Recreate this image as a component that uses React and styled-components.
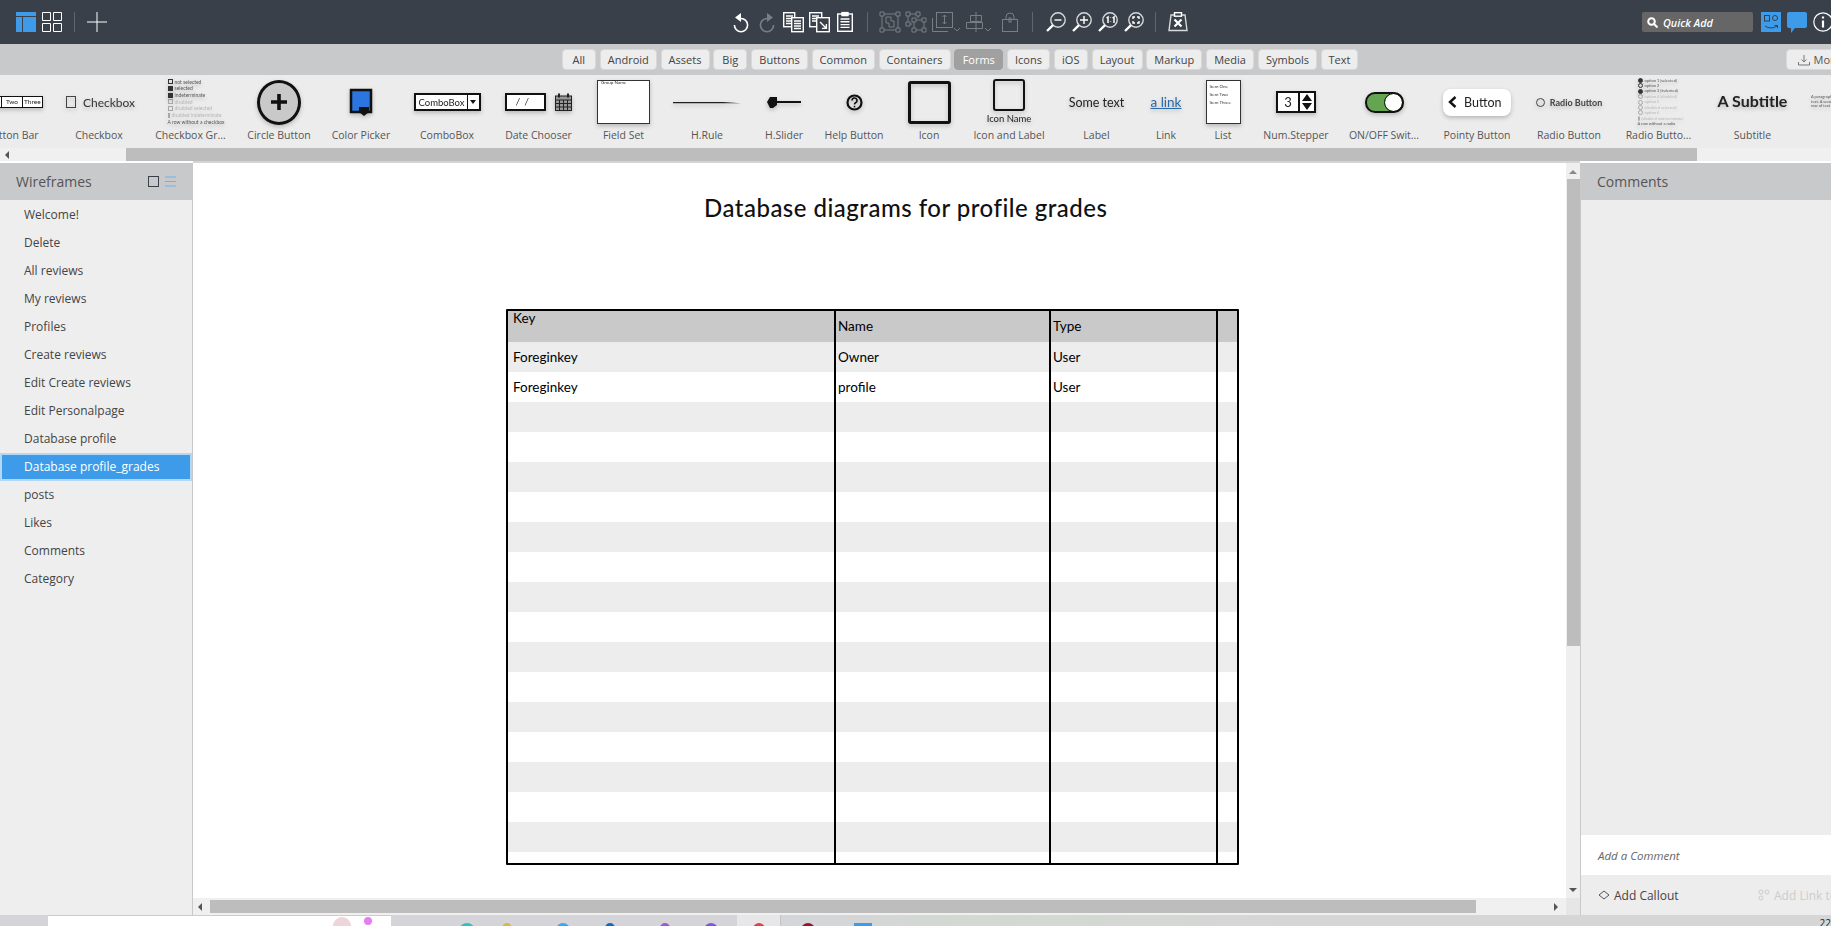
import React from 'react';
import styled, { createGlobalStyle } from 'styled-components';

const GlobalStyle = createGlobalStyle`
  html, body {
    margin: 0;
    padding: 0;
    overflow: hidden;
    background: #fff;
    font-family: 'Open Sans', sans-serif;
  }
`;

const Page = styled.div`
  width: 1831px;
  height: 926px;
  display: flex;
  flex-direction: column;
  overflow: hidden;
`;

/* top toolbar */
const Toolbar = styled.div`
  height: 44px;
  flex: none;
  display: flex;
  align-items: center;
  padding-left: 16px;
  background: #39404a;
  box-sizing: border-box;
`;

const ToolCell = styled.div`
  width: ${p => p.$w}px;
  flex: none;
  height: 20px;
  display: flex;
  opacity: ${p => (p.$dim ? 0.32 : 1)};
  svg { overflow: visible; }
`;

const ToolDivider = styled.div`
  width: ${p => p.$w}px;
  flex: none;
  height: 20px;
  &::before {
    content: '';
    display: block;
    width: 1px;
    height: 20px;
    background: #5f666f;
  }
`;

const QuickAdd = styled.div`
  width: 111px;
  height: 20px;
  flex: none;
  margin-right: 8px;
  border-radius: 2px;
  background: #666;
  color: #fff;
  display: flex;
  align-items: center;
  gap: 5px;
  padding-left: 5px;
  box-sizing: border-box;
  font-size: 10.8px;
  font-style: italic;
  font-weight: 600;
`;

/* filter tabs */
const FilterBar = styled.div`
  height: 31px;
  flex: none;
  display: flex;
  align-items: center;
  gap: 3.75px;
  padding-left: 561.5px;
  background: #c8c9cb;
  box-sizing: border-box;
`;

const Tab = styled.div`
  width: ${p => p.$w}px;
  height: 21px;
  flex: none;
  box-sizing: border-box;
  border: 1px solid ${p => (p.$active ? '#a0a0a0' : '#d8d8d8')};
  border-radius: 4px;
  background: ${p => (p.$active ? '#a0a0a0' : '#ededed')};
  color: ${p => (p.$active ? '#fff' : '#444')};
  font-size: 11px;
  display: flex;
  align-items: center;
  justify-content: center;
`;

const MoreButton = styled.div`
  width: 70px;
  height: 21px;
  flex: none;
  margin-left: 423.75px;
  box-sizing: border-box;
  border: 1px solid #d8d8d8;
  border-radius: 4px;
  background: #ededed;
  color: #555;
  font-size: 11px;
  display: flex;
  align-items: center;
  gap: 4px;
  padding-left: 11px;
`;

/* component library strip */
const Library = styled.div`
  height: 73px;
  flex: none;
  background: #ececec;
  overflow: hidden;
`;

const LibraryRow = styled.div`
  display: flex;
  margin-left: -38px;
  width: 2000px;
`;

const LibraryItem = styled.div`
  width: ${p => p.$w}px;
  flex: none;
  display: flex;
  flex-direction: column;
  align-items: center;
`;

const Thumb = styled.div`
  height: 52px;
  margin-top: 1px;
  width: 100%;
  display: flex;
  align-items: center;
  justify-content: center;
  color: #222;
  font-family: 'Lato', sans-serif;
  filter: drop-shadow(0 2px 2px rgba(0, 0, 0, 0.22)) blur(0.25px);
`;

const ItemLabel = styled.div`
  margin-top: 1px;
  height: 12px;
  line-height: 12px;
  font-size: 10.5px;
  color: #555;
  white-space: nowrap;
`;

const HScroll = styled.div`
  height: ${p => p.$h}px;
  flex: none;
  background: #f0f0f0;
  display: flex;
  align-items: center;
  position: relative;
`;

const ScrollThumb = styled.div`
  height: 13px;
  flex: none;
  width: ${p => p.$w}px;
  margin-left: ${p => p.$left}px;
  background: #bdbdbd;
`;

const ArrowLeft = styled.div`
  position: absolute;
  left: ${p => p.$left}px;
  top: 50%;
  margin-top: -4px;
  border-style: solid;
  border-width: 4px 4px 4px 0;
  border-color: transparent #555 transparent transparent;
`;

const ArrowRight = styled.div`
  position: absolute;
  left: ${p => p.$left}px;
  top: 50%;
  margin-top: -4px;
  border-style: solid;
  border-width: 4px 0 4px 4px;
  border-color: transparent transparent transparent #555;
`;

/* thumbs */
const ButtonBarBox = styled.div`
  display: flex;
  width: 60px;
  height: 10px;
  border: 1px solid #111;
  background: #fff;
  font-size: 6.5px;
  line-height: 10px;
  text-align: center;
`;

const BarSegment = styled.span`
  flex: 1;
  border-left: ${p => (p.$first ? 'none' : '1px solid #111')};
`;

const CheckRow = styled.div`
  display: flex;
  align-items: center;
  gap: 7px;
  font-size: 12px;
  color: #333;
`;

const CheckSquare = styled.div`
  width: 8px;
  height: 10px;
  border: 1px solid #444;
  margin-left: 3px;
`;

const TinyList = styled.div`
  font-size: ${p => p.$size || 5}px;
  line-height: ${p => p.$line || 6.7}px;
  color: #555;
  white-space: nowrap;
  width: ${p => p.$w}px;
`;

const TinyLine = styled.div`
  display: flex;
  align-items: center;
  gap: 2px;
  opacity: ${p => (p.$faded ? 0.35 : 1)};
  &::before {
    content: '';
    display: ${p => (p.$plain ? 'none' : 'block')};
    width: 3px;
    height: 3px;
    border: 0.5px solid #333;
    border-radius: ${p => (p.$round ? '50%' : '0')};
    background: ${p => (p.$on ? '#333' : 'transparent')};
  }
`;

const CircleButton = styled.div`
  width: 38px;
  height: 39px;
  border: 3px solid #111;
  border-radius: 50%;
  background: #c9c9c9;
  display: flex;
  align-items: center;
  justify-content: center;
`;

const ComboBox = styled.div`
  width: 67px;
  height: 18px;
  box-sizing: border-box;
  border: 2px solid #111;
  background: #fff;
  display: flex;
  align-items: center;
  font-size: 9.5px;
  padding-left: 3px;
  justify-content: space-between;
`;

const ComboArrow = styled.div`
  width: 11px;
  height: 14px;
  border-left: 1px solid #111;
  display: flex;
  align-items: center;
  justify-content: center;
  &::after {
    content: '';
    border-style: solid;
    border-width: 4px 3px 0 3px;
    border-color: #111 transparent transparent transparent;
  }
`;

const DateRow = styled.div`
  display: flex;
  align-items: center;
  gap: 9px;
`;

const DateBox = styled.div`
  width: 41px;
  height: 18px;
  box-sizing: border-box;
  border: 2px solid #111;
  background: #fff;
  font-size: 9px;
  font-style: italic;
  word-spacing: 3px;
  padding-left: 9px;
  line-height: 13px;
`;

const FieldBox = styled.div`
  width: ${p => p.$w}px;
  height: 44px;
  box-sizing: border-box;
  border: 1px solid #333;
  background: #fff;
  font-size: 4.5px;
  line-height: ${p => p.$line || 3}px;
  padding: ${p => p.$pad || '0 0 0 3px'};
  color: #333;
  white-space: nowrap;
  overflow: hidden;
`;

const IconFrame = styled.div`
  width: ${p => p.$size}px;
  height: ${p => p.$size}px;
  box-sizing: border-box;
  border: ${p => p.$border}px solid #111;
  border-radius: 3px;
  flex: none;
`;

const IconLabelStack = styled.div`
  display: flex;
  flex-direction: column;
  align-items: center;
  gap: 2px;
  font-size: 9.5px;
  line-height: 12px;
  margin-top: -1px;
`;

const SomeText = styled.div`
  font-size: 12.5px;
  white-space: nowrap;
`;

const LinkText = styled.div`
  font-size: 13.5px;
  color: #2a6aa5;
  text-decoration: underline;
`;

const Stepper = styled.div`
  width: 40px;
  height: 22px;
  box-sizing: border-box;
  border: 2px solid #111;
  background: #fff;
  display: flex;
  font-size: 13px;
  line-height: 18px;
  text-align: center;
`;

const StepperValue = styled.div`
  flex: 1;
  border-right: 2px solid #111;
`;

const StepperArrows = styled.div`
  width: 14px;
  display: flex;
  align-items: center;
  justify-content: center;
`;

const Switch = styled.div`
  width: 39px;
  height: 21px;
  box-sizing: border-box;
  border: 2px solid #111;
  border-radius: 10px;
  background: #63a550;
  display: flex;
  justify-content: flex-end;
`;

const SwitchKnob = styled.div`
  width: 17px;
  height: 17px;
  border-radius: 50%;
  background: #fff;
  outline: 1px solid #111;
`;

const PointyButton = styled.div`
  width: 68px;
  height: 27px;
  border-radius: 8px;
  background: #fff;
  display: flex;
  align-items: center;
  gap: 7px;
  padding-left: 5px;
  box-sizing: border-box;
  font-size: 12.5px;
`;

const RadioRow = styled.div`
  display: flex;
  align-items: center;
  gap: 5px;
  font-size: 9px;
  font-weight: 700;
  color: #444;
  white-space: nowrap;
`;

const RadioDot = styled.div`
  width: 7px;
  height: 7px;
  border: 1px solid #444;
  border-radius: 50%;
`;

const SubtitleText = styled.div`
  font-size: 16px;
  font-weight: 700;
  white-space: nowrap;
  color: #222;
  margin-bottom: 4px;
`;

/* main area */
const Main = styled.div`
  flex: 1;
  min-height: 0;
  display: flex;
`;

const SideHeader = styled.div`
  height: 37px;
  flex: none;
  background: #c8c9cb;
  display: flex;
  align-items: center;
  padding: 0 16px;
  color: #555;
  font-size: 14px;
`;

const HeaderIcons = styled.div`
  margin-left: auto;
  display: flex;
  gap: 6px;
  align-items: center;
`;

const Sidebar = styled.div`
  width: 193px;
  flex: none;
  display: flex;
  flex-direction: column;
  background: #eeeeee;
  border-right: 1px solid #c9c9c9;
  box-sizing: border-box;
  margin-top: 2px;
`;

const PageList = styled.div`
  display: flex;
  flex-direction: column;
  padding-top: 1px;
`;

const PageItem = styled.div`
  height: 28px;
  line-height: ${p => (p.$active ? 24 : 28)}px;
  box-sizing: border-box;
  padding-left: ${p => (p.$active ? 22 : 24)}px;
  font-size: 12px;
  white-space: nowrap;
  color: ${p => (p.$active ? '#fff' : '#444')};
  background: ${p => (p.$active ? '#3d9be9' : 'transparent')};
  border: ${p => (p.$active ? '2px solid #b3d8f5' : 'none')};
`;

const CanvasArea = styled.div`
  flex: 1;
  min-width: 0;
  display: flex;
  flex-direction: column;
  border-top: 2px solid #d4d4d4;
`;

const CanvasRow = styled.div`
  flex: 1;
  min-height: 0;
  display: flex;
`;

const Canvas = styled.div`
  flex: 1;
  min-width: 0;
  background: #fff;
  padding: 30px 0 0 313px;
  box-sizing: border-box;
`;

const Title = styled.div`
  margin-left: 198px;
  height: 30px;
  line-height: 30px;
  font-family: 'Lato', sans-serif;
  font-size: 24px;
  font-weight: 500;
  letter-spacing: 0.49px;
  color: #111;
  white-space: nowrap;
`;

const SheetTable = styled.div`
  width: 733px;
  height: 556px;
  margin-top: 86px;
  box-sizing: border-box;
  border: 2px solid #000;
  border-radius: 1px;
  overflow: hidden;
  background: #fff;
  display: flex;
  flex-direction: column;
  font-family: 'Lato', sans-serif;
  font-size: 13.5px;
  color: #000;
`;

const SheetRow = styled.div`
  height: ${p => p.$h}px;
  flex: none;
  display: grid;
  grid-template-columns: 328px 215px 167px 1fr;
  background: ${p => p.$bg};
`;

const SheetCell = styled.div`
  border-right: ${p => (p.$last ? 'none' : '2px solid #000')};
  padding-left: ${p => p.$pad}px;
  padding-bottom: ${p => (p.$head ? 2 : 0)}px;
  display: flex;
  align-items: ${p => (p.$top ? 'flex-start' : 'center')};
  line-height: ${p => (p.$top ? '14px' : 'normal')};
`;

const VScroll = styled.div`
  width: 14px;
  flex: none;
  background: #efefef;
  display: flex;
  flex-direction: column;
  align-items: center;
  padding-top: 7px;
  position: relative;
`;

const ArrowUp = styled.div`
  border-style: solid;
  border-width: 0 4px 4px 4px;
  border-color: transparent transparent #888 transparent;
`;

const ArrowDown = styled.div`
  position: absolute;
  bottom: 6px;
  border-style: solid;
  border-width: 4px 4px 0 4px;
  border-color: #555 transparent transparent transparent;
`;

const VThumb = styled.div`
  width: 13px;
  height: 467px;
  margin-top: 5px;
  background: #bdbdbd;
`;

const Corner = styled.div`
  position: absolute;
  right: 0;
  top: 0;
  width: 14px;
  height: 100%;
  background: #e6e6e6;
`;

const CommentsPanel = styled.div`
  width: 251px;
  flex: none;
  box-sizing: border-box;
  border-left: 1px solid #c9c9c9;
  background: #ededed;
  display: flex;
  flex-direction: column;
  margin-top: 2px;
`;

const CommentsBody = styled.div`
  flex: 1;
`;

const CommentInput = styled.div`
  height: 40px;
  flex: none;
  background: #fff;
  display: flex;
  align-items: center;
  padding-left: 17px;
  font-size: 11.5px;
  font-style: italic;
  color: #666;
`;

const CommentActions = styled.div`
  height: 40px;
  flex: none;
  display: flex;
  align-items: center;
  padding-left: 17px;
  font-size: 12px;
  white-space: nowrap;
  overflow: hidden;
`;

const CommentAction = styled.div`
  display: flex;
  align-items: center;
  gap: 4px;
  flex: none;
  width: ${p => p.$w}px;
  color: ${p => (p.$off ? '#ccc' : '#444')};
`;

/* OS taskbar cut off at the bottom */
const Taskbar = styled.div`
  height: 11px;
  flex: none;
  display: flex;
  overflow: hidden;
  position: relative;
  background: linear-gradient(90deg, #d5d5d9 0%, #d5d5d9 42%, #d3d9d2 55%, #d6d6d6 70%, #d6d6d6 100%);
`;

const TaskSearch = styled.div`
  width: 343px;
  height: 11px;
  flex: none;
  margin-left: 48px;
  background: #fff;
  border-top: 1px solid #ccc;
  box-sizing: border-box;
  display: flex;
  gap: 13px;
  padding-left: 285px;
`;

const TaskDot = styled.div`
  width: ${p => p.$size}px;
  height: ${p => p.$size}px;
  flex: none;
  margin-left: ${p => p.$left}px;
  margin-top: ${p => p.$top}px;
  border-radius: ${p => (p.$square ? '0' : '50%')};
  background: ${p => p.$color};
`;

const TaskActive = styled.div`
  width: 43px;
  flex: none;
  margin-left: 19px;
  background: #e7e7ea;
  border-right: 1px solid #c4c4c4;
  display: flex;
  justify-content: center;
`;

const TaskClock = styled.div`
  position: absolute;
  right: 0;
  top: 2px;
  font-size: 10px;
  line-height: 12px;
  color: #222;
`;

const Stroke = ({ w = 20, h = 20, vb, children, color = '#fff', sw = 1.4 }) => (
  <svg width={w} height={h} viewBox={vb || `0 0 ${w} ${h}`} fill="none" stroke={color} strokeWidth={sw}>
    {children}
  </svg>
);

const UndoIcon = ({ flip }) => (
  <Stroke w={16} h={20}>
    <g transform={flip ? 'translate(16 0) scale(-1 1)' : undefined}>
      <path d="M8 6.5a6.6 6.6 0 1 1-6.6 6.6" strokeWidth={1.6} />
      <path d="M2 5.5 8 1v9z" fill="#fff" stroke="none" />
    </g>
  </Stroke>
);

const CopyIcon = ({ arrow }) => (
  <Stroke w={20} h={20}>
    <rect x="0.7" y="0.7" width={arrow ? 12 : 11} height={14} fill="#39404a" />
    {!arrow && <path d="M3 4h7M3 6.5h7M3 9h7M3 11.5h7" />}
    {arrow && <path d="M3 4h7M3 6.5h7M3 9h5" />}
    <rect x={arrow ? 7.7 : 8.7} y="5.7" width={arrow ? 12.6 : 11.6} height="14" fill="#39404a" />
    {!arrow && <path d="M11 9h7M11 11.5h7M11 14h7M11 16.5h7" />}
    {arrow && <path d="M11 10l6 6M17.4 12v4.4H13" />}
  </Stroke>
);

const PasteIcon = () => (
  <Stroke w={16} h={20}>
    <rect x="0.7" y="2" width="14.6" height="17.3" />
    <rect x="5" y="0.6" width="6" height="3" fill="#fff" />
    <path d="M3.5 7h9M3.5 9.8h9M3.5 12.6h9M3.5 15.4h9" />
  </Stroke>
);

const GroupIcon = () => (
  <Stroke w={20} h={20} sw={1}>
    <path d="M2 2h16v16H2z" />
    <path d="M0 0h4v4H0zM16 0h4v4h-4zM0 16h4v4H0zM16 16h4v4h-4z" fill="#39404a" />
    <path d="M6 5h5v4h3v6H9v-4H6z" />
  </Stroke>
);

const UngroupIcon = () => (
  <Stroke w={20} h={20} sw={1}>
    <path d="M0 0h4v4H0zM10 0h4v4h-4zM0 10h4v4H0zM6 6h4v4H6zM16 6h4v4h-4zM6 16h4v4H6zM16 16h4v4h-4z" />
    <path d="M4 2h6M2 4v6M4 12h2M12 4v2M10 8h6M8 10v6M18 10v6M10 18h6" />
  </Stroke>
);

const LayerIcon = () => (
  <Stroke w={28} h={20} sw={1}>
    <rect x="4.5" y="0.5" width="16" height="15" />
    <path d="M0.5 6v13.5H16" />
    <path d="M12.5 3v9M10.5 5l2-2 2 2M10.5 10l2 2 2-2" />
    <path d="M22 16l3 3 3-3" />
  </Stroke>
);

const AlignIcon = () => (
  <Stroke w={26} h={20} sw={1}>
    <path d="M10 0v20M4.5 3.5h11v6h-11zM0.5 10.5h16v6H0.5z" />
    <path d="M19 16l3 3 3-3" />
  </Stroke>
);

const LockIcon = () => (
  <Stroke w={16} h={20} sw={1}>
    <rect x="0.5" y="7.5" width="15" height="12" />
    <path d="M4 7.5V5a4 4 0 0 1 8 0v2.5" />
    <rect x="7" y="6" width="2" height="4" />
  </Stroke>
);

const ZoomIcon = ({ children }) => (
  <Stroke w={20} h={20}>
    <circle cx="12" cy="8" r="7.2" strokeOpacity={0.8} />
    <path d="M7 13.2 1 19" strokeWidth={2.4} />
    {children}
  </Stroke>
);

const ClearIcon = () => (
  <Stroke w={20} h={20}>
    <path d="M3 3h14l2 15.5H1z" strokeOpacity={0.8} />
    <rect x="6.5" y="0.7" width="7" height="3.5" fill="#39404a" />
    <path d="M6.5 7.5l7 7M13.5 7.5l-7 7" strokeWidth={2.2} />
  </Stroke>
);

const tabs = [
  ['All', 34.5], ['Android', 57], ['Assets', 49], ['Big', 34], ['Buttons', 57], ['Common', 63],
  ['Containers', 72], ['Forms', 49, true], ['Icons', 43], ['iOS', 34], ['Layout', 51],
  ['Markup', 56], ['Media', 48], ['Symbols', 59.5], ['Text', 37],
];

const pages = [
  'Welcome!', 'Delete', 'All reviews', 'My reviews', 'Profiles', 'Create reviews',
  'Edit Create reviews', 'Edit Personalpage', 'Database profile', 'Database profile_grades',
  'posts', 'Likes', 'Comments', 'Category',
];

const rows = [
  ['Foreginkey', 'Owner', 'User'],
  ['Foreginkey', 'profile', 'User'],
  ...Array.from({ length: 16 }, () => ['', '', '']),
];

const checkLines = [
  ['not selected'], ['selected', false, true], ['indeterminate', false, true],
  ['disabled', true], ['disabled selected', true], ['disabled indeterminate', true],
];

const radioLines = [
  ['option 1 (selected)', false, true], ['option 2'], ['option 3 (indented)', false, true],
  ['option 4 (disabled)', true], ['option 5', true], ['(disabled selected)', true],
  ['option 6', true], ['(disabled indeterminate)', true],
];

const library = [
  ['Button Bar', 100, (
    <ButtonBarBox key="b">
      <BarSegment $first>One</BarSegment>
      <BarSegment>Two</BarSegment>
      <BarSegment>Three</BarSegment>
    </ButtonBarBox>
  )],
  ['Checkbox', 74, <CheckRow key="b"><CheckSquare />Checkbox</CheckRow>],
  ['Checkbox Gr...', 109, (
    <TinyList key="b" $w={46}>
      {checkLines.map(l => <TinyLine key={l[0]} $faded={l[1]} $on={l[2]}>{l[0]}</TinyLine>)}
      <TinyLine $plain>A row without a checkbox</TinyLine>
    </TinyList>
  )],
  ['Circle Button', 68, (
    <CircleButton key="b">
      <svg width="18" height="18" viewBox="0 0 18 18"><path d="M9 1v16M1 9h16" stroke="#111" strokeWidth="3.6" /></svg>
    </CircleButton>
  )],
  ['Color Picker', 96, (
    <svg key="b" width="24" height="28" viewBox="0 0 24 28">
      <path d="M2 2h20v22H2z" fill="#2a75e0" stroke="#111" strokeWidth="2.5" />
      <path d="M10 19h10v5l-5 4-5-4z" fill="#111" />
    </svg>
  )],
  ['ComboBox', 76, <ComboBox key="b">ComboBox<ComboArrow /></ComboBox>],
  ['Date Chooser', 107, (
    <DateRow key="b">
      <DateBox>/ /</DateBox>
      <svg width="17" height="18" viewBox="0 0 17 18" fill="none" stroke="#222">
        <rect x="0.5" y="3" width="16" height="14.5" fill="#999" />
        <path d="M0.5 7h16M0.5 10.5h16M0.5 14h16M4.5 7v10M8.5 7v10M12.5 7v10" />
        <path d="M4 0.5v4M13 0.5v4" strokeWidth="2" />
      </svg>
    </DateRow>
  )],
  ['Field Set', 63, <FieldBox key="b" $w={53}>Group Name</FieldBox>],
  ['H.Rule', 104, (
    <svg key="b" width="68" height="3" viewBox="0 0 68 3"><path d="M0 1h50l18 1.2H0z" fill="#222" /></svg>
  )],
  ['H.Slider', 50, (
    <svg key="b" width="34" height="12" viewBox="0 0 34 12">
      <path d="M4 6h30" stroke="#111" strokeWidth="2" />
      <path d="M0 6l3-5h7v8l-4 3H3z" fill="#111" />
    </svg>
  )],
  ['Help Button', 90, (
    <svg key="b" width="17" height="17" viewBox="0 0 17 17" fill="none" stroke="#111">
      <circle cx="8.5" cy="8.5" r="7" strokeWidth="2.2" />
      <path d="M6 6.5a2.5 2.5 0 1 1 3.6 2.3c-.8.4-1.1.8-1.100 1.700" strokeWidth="1.6" />
      <path d="M8.5 11.800v1.600" strokeWidth="1.6" />
    </svg>
  )],
  ['Icon', 60, <IconFrame key="b" $size={43} $border={3} />],
  ['Icon and Label', 100, <IconLabelStack key="b"><IconFrame $size={32} $border={2} />Icon Name</IconLabelStack>],
  ['Label', 75, <SomeText key="b">Some text</SomeText>],
  ['Link', 64, <LinkText key="b">a link</LinkText>],
  ['List', 50, <FieldBox key="b" $w={35} $line={8} $pad="2px 0 0 3px">Item One<br />Item Two<br />Item Three</FieldBox>],
  ['Num.Stepper', 96, (
    <Stepper key="b">
      <StepperValue>3</StepperValue>
      <StepperArrows>
        <svg width="10" height="16" viewBox="0 0 10 16"><path d="M5 0l5 7H0zM5 16l5-7H0z" fill="#111" /></svg>
      </StepperArrows>
    </Stepper>
  )],
  ['ON/OFF Swit...', 80, <Switch key="b"><SwitchKnob /></Switch>],
  ['Pointy Button', 106, (
    <PointyButton key="b">
      <svg width="9" height="12" viewBox="0 0 9 12" fill="none"><path d="M7.5 1 2 6l5.5 5" stroke="#111" strokeWidth="2.4" /></svg>
      Button
    </PointyButton>
  )],
  ['Radio Button', 78, <RadioRow key="b"><RadioDot />Radio Button</RadioRow>],
  ['Radio Butto...', 101, (
    <TinyList key="b" $w={42} $size={4} $line={5.4}>
      {radioLines.map(l => <TinyLine key={l[0]} $round $faded={l[1]} $on={l[2]}>{l[0]}</TinyLine>)}
      <TinyLine $plain>A row without a radio</TinyLine>
    </TinyList>
  )],
  ['Subtitle', 87, <SubtitleText key="b">A Subtitle</SubtitleText>],
  ['Text', 100, <TinyList key="b" $w={70} $size={4} $line={4.5}>A paragraph of<br />text. A second<br />row of text</TinyList>],
];

const App = () => (
  <Page>
    <GlobalStyle />
    <Toolbar>
      <ToolCell $w={26}>
        <svg width="20" height="20" viewBox="0 0 20 20" fill="#3d9be9">
          <path d="M0 0h20v4H0zM0 5h6v15H0zM7 5h13v15H7z" />
        </svg>
      </ToolCell>
      <ToolCell $w={32}>
        <Stroke w={20} h={20} sw={1}>
          <path d="M.5.5h8v8h-8zM11.5.5h8v8h-8zM.5 11.5h8v8h-8zM11.5 11.5h8v8h-8z" />
        </Stroke>
      </ToolCell>
      <ToolDivider $w={13} />
      <ToolCell $w={646}>
        <Stroke w={20} h={20} sw={1}><path d="M10 0v20M0 10h20" /></Stroke>
      </ToolCell>
      <ToolCell $w={26}><UndoIcon /></ToolCell>
      <ToolCell $w={24} $dim><UndoIcon flip /></ToolCell>
      <ToolCell $w={26}><CopyIcon /></ToolCell>
      <ToolCell $w={28}><CopyIcon arrow /></ToolCell>
      <ToolCell $w={30}><PasteIcon /></ToolCell>
      <ToolDivider $w={13} />
      <ToolCell $w={26} $dim><GroupIcon /></ToolCell>
      <ToolCell $w={26} $dim><UngroupIcon /></ToolCell>
      <ToolCell $w={34} $dim><LayerIcon /></ToolCell>
      <ToolCell $w={36} $dim><AlignIcon /></ToolCell>
      <ToolCell $w={30} $dim><LockIcon /></ToolCell>
      <ToolDivider $w={14} />
      <ToolCell $w={26}><ZoomIcon><path d="M8.5 8h7" /></ZoomIcon></ToolCell>
      <ToolCell $w={26}><ZoomIcon><path d="M8 8h8M12 4v8" /></ZoomIcon></ToolCell>
      <ToolCell $w={26}><ZoomIcon><path d="M8.5 6l1.5-1v6M12.5 5.5v.5M12.5 9v.5M14.5 6l1.5-1v6" strokeWidth={1.5} /></ZoomIcon></ToolCell>
      <ToolCell $w={31}><ZoomIcon><path d="M9 7V5h2M13 5h2v2M15 9v2h-2M11 11H9V9" /></ZoomIcon></ToolCell>
      <ToolDivider $w={13} />
      <ToolCell $w={474}><ClearIcon /></ToolCell>
      <QuickAdd>
        <svg width="11" height="11" viewBox="0 0 11 11" fill="none" stroke="#fff" strokeWidth="2">
          <circle cx="4.5" cy="4.5" r="3.3" /><path d="M7 7l3.5 3.5" />
        </svg>
        Quick Add
      </QuickAdd>
      <ToolCell $w={26}>
        <svg width="20" height="20" viewBox="0 0 20 20" fill="none" stroke="#39404a">
          <rect width="20" height="20" fill="#3d9be9" stroke="none" />
          <rect x="3.5" y="3.5" width="5" height="5.5" />
          <circle cx="14" cy="6" r="2.5" />
          <path d="M4 14c4 2.5 8 2.5 12 0M13.5 13.5H16.5V16" />
        </svg>
      </ToolCell>
      <ToolCell $w={26}>
        <svg width="20" height="21" viewBox="0 0 20 21" fill="#3d9be9">
          <path d="M2 0h16a2 2 0 0 1 2 2v12a2 2 0 0 1-2 2H8l-4 5v-5H2a2 2 0 0 1-2-2V2a2 2 0 0 1 2-2z" />
        </svg>
      </ToolCell>
      <ToolCell $w={20}>
        <Stroke w={20} h={20} sw={1.2}>
          <circle cx="10" cy="10" r="9.2" />
          <path d="M10 8.5v7" strokeWidth={2.2} />
          <path d="M10 4.500v2" strokeWidth={2.2} />
        </Stroke>
      </ToolCell>
    </Toolbar>

    <FilterBar>
      {tabs.map(([name, w, active]) => (
        <Tab key={name} $w={w} $active={active}>{name}</Tab>
      ))}
      <MoreButton>
        <svg width="12" height="12" viewBox="0 0 12 12" fill="none" stroke="#777">
          <path d="M6 1v7M3.5 5.5 6 8l2.5-2.5M.5 8v3h11V8" />
        </svg>
        More
      </MoreButton>
    </FilterBar>

    <Library>
      <LibraryRow>
        {library.map(([name, w, thumb]) => (
          <LibraryItem key={name} $w={w}>
            <Thumb>{thumb}</Thumb>
            <ItemLabel>{name}</ItemLabel>
          </LibraryItem>
        ))}
      </LibraryRow>
    </Library>
    <HScroll $h={13}>
      <ArrowLeft $left={5} />
      <ScrollThumb $left={126} $w={1571} />
    </HScroll>

    <Main>
      <Sidebar>
        <SideHeader>
          Wireframes
          <HeaderIcons>
            <svg width="11" height="11" viewBox="0 0 11 11" fill="none" stroke="#39404a"><rect x=".5" y=".5" width="10" height="10" /></svg>
            <svg width="11" height="11" viewBox="0 0 11 11" fill="none" stroke="#6db3ec"><path d="M0 1h11M0 5.5h11M0 10h11" /></svg>
          </HeaderIcons>
        </SideHeader>
        <PageList>
          {pages.map(name => (
            <PageItem key={name} $active={name === 'Database profile_grades'}>{name}</PageItem>
          ))}
        </PageList>
      </Sidebar>

      <CanvasArea>
        <CanvasRow>
          <Canvas>
            <Title>Database diagrams for profile grades</Title>
            <SheetTable>
              <SheetRow $h={31} $bg="#c9c9c9">
                <SheetCell $pad={5} $top>Key</SheetCell>
                <SheetCell $pad={2} $head>Name</SheetCell>
                <SheetCell $pad={2} $head>Type</SheetCell>
                <SheetCell $last />
              </SheetRow>
              {rows.map((r, i) => (
                <SheetRow key={i} $h={30} $bg={i % 2 === 0 ? '#ededed' : '#fff'}>
                  <SheetCell $pad={5}>{r[0]}</SheetCell>
                  <SheetCell $pad={2}>{r[1]}</SheetCell>
                  <SheetCell $pad={2}>{r[2]}</SheetCell>
                  <SheetCell $last />
                </SheetRow>
              ))}
            </SheetTable>
          </Canvas>
          <VScroll>
            <ArrowUp />
            <VThumb />
            <ArrowDown />
          </VScroll>
        </CanvasRow>
        <HScroll $h={17}>
          <ArrowLeft $left={5} />
          <ScrollThumb $left={17} $w={1266} />
          <ArrowRight $left={1361} />
          <Corner />
        </HScroll>
      </CanvasArea>

      <CommentsPanel>
        <SideHeader>Comments</SideHeader>
        <CommentsBody />
        <CommentInput>Add a Comment</CommentInput>
        <CommentActions>
          <CommentAction $w={160}>
            <svg width="12" height="10" viewBox="0 0 12 10" fill="none" stroke="#555"><path d="M1 5l5-4 5 4-5 4z" /></svg>
            Add Callout
          </CommentAction>
          <CommentAction $w={110} $off>
            <svg width="12" height="12" viewBox="0 0 12 12" fill="none" stroke="#ccc"><circle cx="3" cy="3" r="2" /><circle cx="9" cy="3" r="2" /><circle cx="3" cy="9" r="2" /></svg>
            Add Link to
          </CommentAction>
        </CommentActions>
      </CommentsPanel>
    </Main>

    <Taskbar>
      <TaskSearch>
        <TaskDot $size={18} $left={0} $top={1} $color="#eed5dc" />
        <TaskDot $size={8} $left={0} $top={1} $color="#e87df0" />
      </TaskSearch>
      <TaskDot $size={16} $left={68} $top={8} $color="#2fc0c4" />
      <TaskDot $size={10} $left={27} $top={8} $color="#e0b44a" />
      <TaskDot $size={14} $left={44} $top={8} $color="#35a8f0" />
      <TaskDot $size={10} $left={35} $top={8} $color="#1668b8" />
      <TaskDot $size={10} $left={45} $top={8} $color="#9a5ad8" />
      <TaskDot $size={14} $left={34} $top={8} $color="#7f55e0" />
      <TaskActive><TaskDot $size={12} $left={0} $top={8} $color="#e84040" /></TaskActive>
      <TaskDot $size={14} $left={20} $top={8} $color="#a01020" />
      <TaskDot $size={18} $left={39} $top={8} $color="#3d9be9" $square />
      <TaskClock>22</TaskClock>
    </Taskbar>
  </Page>
);

export default App;
